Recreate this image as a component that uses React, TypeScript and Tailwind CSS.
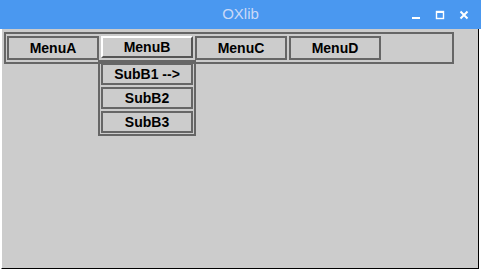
import React from "react";

const menus = ["MenuA", "MenuB", "MenuC", "MenuD"];
const subItems = ["SubB1 -->", "SubB2", "SubB3"];

const TitleBar: React.FC = () => (
  <div className="relative flex h-[29px] items-center justify-center bg-[#4a98f0]">
    <span className="text-[15px] text-[#c9d9f7] font-['Liberation_Sans',sans-serif]">
      OXlib
    </span>
    <div className="absolute right-[12px] top-0 flex h-full items-center gap-[14px]">
      <svg width="10" height="10" viewBox="0 0 10 10">
        <rect x="1" y="7" width="8" height="2" fill="white" />
      </svg>
      <svg width="10" height="10" viewBox="0 0 10 10">
        <rect x="1.5" y="1.5" width="7" height="7" fill="none" stroke="white" strokeWidth="1.4" />
        <rect x="1" y="1" width="8" height="2" fill="white" />
      </svg>
      <svg width="10" height="10" viewBox="0 0 10 10">
        <path d="M1.5 1.5 L8.5 8.5 M8.5 1.5 L1.5 8.5" stroke="white" strokeWidth="2" />
      </svg>
    </div>
  </div>
);

export default function App() {
  return (
    <div className="flex h-[271px] w-[481px] flex-col bg-white font-['Liberation_Sans',sans-serif]">
      <TitleBar />
      <div className="relative ml-[1px] h-[240px] w-[478px] border-b border-r border-dotted border-b-black border-r-black border-l border-l-white border-solid bg-[#cccccc]">
        <div className="ml-[2px] mt-[3px] flex h-[32px] w-[450px] gap-[2px] border-2 border-[#666666] pl-[1px] pt-[2px]">
          {menus.map((m) =>
            m === "MenuB" ? (
              <div
                key={m}
                className="flex h-[22px] w-[92px] items-center justify-center border-2 border-t-white border-l-white border-r-[#555555] border-b-[#555555] text-[14px] font-bold text-black"
              >
                {m}
              </div>
            ) : (
              <div
                key={m}
                className="flex h-[24px] w-[92px] items-center justify-center border-2 border-[#666666] text-[14px] font-bold text-black"
              >
                {m}
              </div>
            )
          )}
        </div>
        <div className="absolute left-[96px] top-[31px] flex w-[98px] flex-col gap-[2px] border-2 border-[#666666] p-[1px]">
          {subItems.map((s) => (
            <div
              key={s}
              className="flex h-[22px] w-[92px] items-center justify-center border-2 border-[#666666] text-[14px] font-bold text-black"
            >
              {s}
            </div>
          ))}
        </div>
      </div>
    </div>
  );
}
